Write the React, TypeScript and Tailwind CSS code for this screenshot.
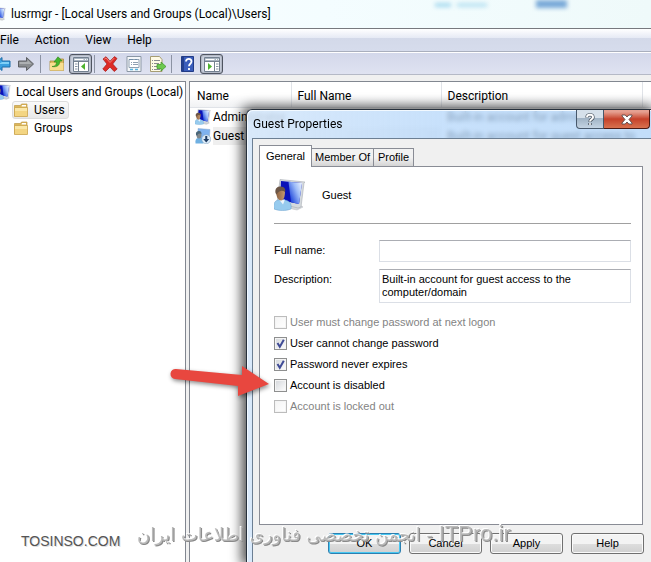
import type { ReactNode } from "react";
import { useState } from "react";

function ComputerUserIcon({ className, viewBox = "0 0 32 32" }: { className?: string; viewBox?: string }) {
  return (
    <svg className={className} viewBox={viewBox} aria-hidden="true">
      <defs>
        <linearGradient id="screen" x1="0" y1=".8" x2="1" y2=".1">
          <stop offset=".1" stopColor="#2148dc" />
          <stop offset=".6" stopColor="#9dbcf8" />
          <stop offset="1" stopColor="#eaf3ff" />
        </linearGradient>
        <linearGradient id="face" x1="0" x2="1">
          <stop offset="0" stopColor="#8a5f3e" />
          <stop offset="1" stopColor="#c79a70" />
        </linearGradient>
      </defs>
      <path d="M16 26l8-1 5 3-6 3-9-2z" fill="#d5d8db" stroke="#b4b9be" strokeWidth=".5" />
      <path d="M6 .5l25 2.500-1 1-3 24-3 1-21-5z" fill="#d5dade" stroke="#a7adb3" strokeWidth=".6" />
      <path d="M7 2l21 2-3 21-19-4z" fill="#0a12b8" />
      <path d="M14.500 2.700L28 4l-3 21-8-1.700z" fill="url(#screen)" />
      <path d="M0 30c-1-6 1-8 4-9h7c4 1 7 3 6 9-5 2-12 2-17 0z" fill="#97cbee" stroke="#6ba1cc" strokeWidth=".5" />
      <path d="M5 20.500l4 5 2-5z" fill="#eef6fc" />
      <path d="M2 12c0-4 9-4 9 0 0 5-1 9.500-4 9.500S2 17 2 12z" fill="url(#face)" />
      <path d="M1.500 14c-.8-5 2-6.500 5-6.500 4 0 5.500 3 4.500 5.500-3-2-6-1.500-8.500 2.500z" fill="#6b5546" />
    </svg>
  );
}

function DisabledUserIcon({ className }: { className?: string }) {
  return (
    <svg className={className} viewBox="0 0 32 32" aria-hidden="true">
      <path d="M6 1l24 2-2 24-22-3z" fill="#7fb2ee" stroke="#86a9cc" />
      <path d="M1 31c-1-7 1-10 5-11h6c4 1 6 5 5 11z" fill="#6fb0e2" />
      <ellipse cx="8" cy="14" rx="5" ry="7" fill="#80878b" />
      <path d="M2 14c-1-6 2-8 6-8 4 .3 5.500 3 4.500 6-4-2-7-1-8 4z" fill="#4a6678" />
      <circle cx="22.500" cy="22.500" r="9" fill="#dcebf8" stroke="#7d9cb8" />
      <path d="M20.500 16h4v6h4l-6 7-6-7h4z" fill="#1f3d63" />
    </svg>
  );
}

function FolderIcon() {
  return (
    <svg className="h-[14px] w-[14px] shrink-0" viewBox="0 0 14 14" aria-hidden="true">
      <path d="M.5 2.500h6l1-1.500h5.500v12H.5z" fill="#dcb65a" stroke="#bf9a45" strokeWidth=".7" />
      <path d="M8 2h4v1.500H7.500z" fill="#fff" />
      <path d="M.5 4.500h13v9H.5z" fill="#f3d582" stroke="#c9a24a" strokeWidth=".7" />
      <path d="M1 5h12v3H1z" fill="#fae7a8" />
    </svg>
  );
}

function ArrowIcon({ back }: { back?: boolean }) {
  return back ? (
    <svg className="h-4 w-[11px]" viewBox="5 0 11 16" aria-hidden="true">
      <path d="M0 8l7-6.500V5h8v6H7v3.500z" fill="#3aa0e0" stroke="#1d6da8" />
      <path d="M7 6h7v2H4z" fill="#7fd0f7" />
    </svg>
  ) : (
    <svg className="h-4 w-4" viewBox="0 0 16 16" aria-hidden="true">
      <path d="M15.500 8L8.500 1.500V5H.5v6h8v3.500z" fill="#8a8d90" stroke="#5c5f63" />
      <path d="M1.500 6h8V4l4 4h-12z" fill="#adb0b2" />
    </svg>
  );
}

function UpFolderIcon() {
  return (
    <svg className="h-4 w-4" viewBox="0 0 16 16" aria-hidden="true">
      <path d="M1 5h6l2-2h5.500v11.500H1z" fill="#e2bd62" stroke="#a98a3f" strokeWidth=".8" />
      <path d="M1 7h13.500v7.500H1z" fill="#f8de90" />
      <path d="M3 10.500c3 0 4.500-1.500 4.500-4.500H5L9 .8 13.200 5h-2.400c0 4-2.300 6.500-7.800 5.500z" fill="#45b52c" stroke="#2d8519" strokeWidth=".6" />
    </svg>
  );
}

function PaneIcon({ flip }: { flip?: boolean }) {
  return (
    <svg className="h-4 w-4" viewBox="0 0 16 16" aria-hidden="true">
      <path d="M.5 1.500h15v14H.5z" fill="#fff" stroke="#73808f" />
      <path d="M1 2h14v3H1z" fill="#a9b4c1" />
      <path d="M1.500 3.500h9M12 3.500h1M14 3.500h.8" stroke="#fff" />
      {flip ? (
        <>
          <path d="M10.500 6v9M1 5.500h14" stroke="#73808f" />
          <path d="M12 8h2.500M12 10.500h2.500M12 13h2.500" stroke="#8794a5" />
          <path d="M4 7l4 3.500L4 14z" fill="#4eb32f" />
        </>
      ) : (
        <>
          <path d="M5.500 6v9M1 5.500h14" stroke="#73808f" />
          <path d="M2 8h2.500M2 10.500h2.500M2 13h2.500" stroke="#8794a5" />
          <path d="M12 7l-4 3.500 4 3.500z" fill="#4eb32f" />
        </>
      )}
    </svg>
  );
}

function DeleteIcon() {
  return (
    <svg className="h-4 w-4" viewBox="0 0 16 16" aria-hidden="true">
      <path
        d="M1 3l3-2.300 4 4.500L12.500.6 15 2.500 10.700 8l4.500 5-3 2.500L8 11l-4.500 4.500L.8 13 5 8z"
        fill="#dd2b26"
        stroke="#a51512"
        strokeWidth=".7"
      />
      <path d="M2.300 3.200L4 2l4 4.500L12.300 2" stroke="#f58078" fill="none" />
    </svg>
  );
}

function PropertiesIcon() {
  return (
    <svg className="h-4 w-4" viewBox="0 0 16 16" aria-hidden="true">
      <path d="M1 .5h14v15H1z" fill="#f6f8fa" stroke="#8b97a5" />
      <path d="M3 3.500h10v8H3z" fill="#fff" stroke="#8fa0b2" />
      <path d="M3 3.500h4M9 3.500h2" stroke="#6f8ba5" />
      <path d="M5 6.500h1M7 6.500h5M5 8.500h1M7 8.500h5" stroke="#8fa0b2" />
      <path d="M4 13.500h3M9 13.500h3" stroke="#56b3de" strokeWidth="1.500" />
    </svg>
  );
}

function ExportIcon() {
  return (
    <svg className="h-4 w-4" viewBox="0 0 16 16" aria-hidden="true">
      <path d="M.5.5h9l2.500 3v12H.5z" fill="#fffbe6" stroke="#a69d73" />
      <path d="M2 4.500h1M4 4.500h6M2 7.500h1M4 7.500h5M2 10.500h1M4 10.500h5M2 13.500h1M4 13.500h6" stroke="#8c8c90" />
      <path d="M7 8.500h4V6l5 4.500-5 4.500v-2.500H7z" fill="#6cc94f" stroke="#3b9423" strokeWidth=".7" />
    </svg>
  );
}

function HelpIcon() {
  return (
    <svg className="h-4 w-[13px]" viewBox="0 0 13 16" aria-hidden="true">
      <path d="M.5.5h12v15H.5z" fill="#3a5dbb" stroke="#223c86" />
      <path d="M1 1h2v14H1z" fill="#23408f" />
      <path d="M5 5.500c0-3.500 5.500-3.500 5.500 0C10.500 8 8 7.500 8 10.300M8 12v2" fill="none" stroke="#fff" strokeWidth="1.800" />
    </svg>
  );
}

function ToolButton({ label, boxed, children }: { label: string; boxed?: boolean; children: ReactNode }) {
  return (
    <button
      type="button"
      aria-label={label}
      className={
        boxed
          ? "flex h-5 w-[23px] items-center justify-center rounded-[3px] border border-[#4f5561] bg-[#cdd2df] shadow-[inset_0_0_2px_#6b7280]"
          : "flex items-center justify-center"
      }
    >
      {children}
    </button>
  );
}

function Separator({ className }: { className: string }) {
  return <span className={`h-[18px] w-px bg-[#8c93a3] ${className}`} />;
}

const menus = ["File", "Action", "View", "Help"];

const accounts = [
  {
    name: "Administrator",
    description: "Built-in account for administering",
    icon: <ComputerUserIcon className="h-4 w-4 shrink-0" />,
  },
  {
    name: "Guest",
    description: "Built-in account for guest access to",
    icon: <DisabledUserIcon className="h-4 w-4 shrink-0" />,
    selected: true,
  },
];

const options = [
  { id: "must-change", label: "User must change password at next logon", checked: false, disabled: true },
  { id: "cannot-change", label: "User cannot change password", checked: true },
  { id: "never-expires", label: "Password never expires", checked: true },
  { id: "disabled", label: "Account is disabled", checked: false },
  { id: "locked", label: "Account is locked out", checked: false, disabled: true },
];

function Option({ id, label, checked, disabled }: { id: string; label: string; checked: boolean; disabled?: boolean }) {
  let [on, setOn] = useState(checked);

  return (
    <div className="flex h-[21px] items-center gap-[3px]">
      <span className="relative flex">
        <input
          id={id}
          type="checkbox"
          checked={on}
          disabled={disabled}
          onChange={(e) => setOn(e.target.checked)}
          className="h-[13px] w-[13px] appearance-none border border-[#8e8f8f] bg-linear-to-br from-[#d3d6da] to-white shadow-[inset_0_0_0_1px_#f4f4f4] disabled:border-[#bcbcbc] disabled:from-[#f4f4f4]"
        />
        {on && (
          <svg className="pointer-events-none absolute inset-0 h-[13px] w-[13px]" viewBox="0 0 13 13" aria-hidden="true">
            <path d="M3.500 6l2.300 3.800L9.800 2.800" fill="none" stroke="#3f4b96" strokeWidth="2" />
          </svg>
        )}
      </span>
      <label htmlFor={id} className={disabled ? "text-[#838383]" : ""}>
        {label}
      </label>
    </div>
  );
}

function DialogButton({ children, primary }: { children: ReactNode; primary?: boolean }) {
  return (
    <button
      type="button"
      className={`h-[21px] w-[73px] rounded-[3px] border bg-linear-to-b from-[#f3f3f3] from-50% via-[#dedede] via-50% to-[#d0d0d0] ${
        primary ? "border-[#2c7fb0] shadow-[inset_0_0_0_1px_#48c8f2]" : "border-[#707070] shadow-[inset_0_0_0_1px_#fafafa]"
      }`}
    >
      {children}
    </button>
  );
}

function PropertiesDialog() {
  return (
    <section
      role="dialog"
      aria-label="Guest Properties"
      className="absolute top-[109px] right-0 bottom-0 left-[246px] flex flex-col rounded-tl-[6px] border-t border-l border-[#27313d] bg-linear-to-r from-[#d5e7fa]/90 via-[#b4d6fa]/75 to-[#aed2f7]/75 pl-[5px] font-['Liberation_Sans',Arial,sans-serif] text-[11px] leading-[13px] shadow-[-2px_0_12px_3px_rgba(0,0,0,0.65),inset_1px_1px_0_#f2f9ff] backdrop-blur-[2px]"
    >
      <header className="flex h-7 items-start pr-px">
        <h2 className="flex-1 pt-[5px] pl-px font-[Roboto,'Noto_Sans',sans-serif] text-[12px] leading-[18px]">
          Guest Properties
        </h2>
        <button
          type="button"
          aria-label="Help"
          className="flex h-[19px] w-[28px] items-center justify-center rounded-bl-[4px] border border-t-0 border-[#47586b] bg-linear-to-b from-[#d5e0ea] from-45% via-[#9fb2c4] via-45% to-[#c4d4e3]"
        >
          <svg className="h-[13px] w-[10px]" viewBox="0 0 10 13" aria-hidden="true">
            <path d="M2 4.500c0-3.500 6-3.500 6 0C8 6.500 5 6 5 8.700M5 10v2" fill="none" stroke="#47525e" strokeWidth="3.400" />
            <path d="M2 4.200c0-3.200 6-3.200 6 0C8 6.500 5 6 5 8.500M5 10.200v1.600" fill="none" stroke="#fff" strokeWidth="2" />
          </svg>
        </button>
        <button
          type="button"
          aria-label="Close"
          className="flex h-[19px] w-[46px] items-center justify-center rounded-br-[4px] border border-t-0 border-l-0 border-[#4c1a14] bg-linear-to-b from-[#e5a091] from-10% via-[#c5412a] via-50% to-[#d8714f]"
        >
          <svg className="h-[11px] w-[12px]" viewBox="0 0 12 11" aria-hidden="true">
            <path
              d="M1 1h3.200L6 3l1.800-2H11v1L8 5.500 11 9v1H7.800L6 8l-1.800 2H1V9l3-3.500L1 2z"
              fill="#fff"
              stroke="#5b4a4a"
              strokeWidth=".9"
            />
          </svg>
        </button>
      </header>

      <div className="flex flex-1 flex-col border-t border-l border-[#6c7f93] bg-[#f0f0f0] pt-[6px] pr-[7px] pb-2 pl-[6px]">
        <div role="tablist" className="flex items-end pr-[1px]">
          <button
            type="button"
            role="tab"
            aria-selected="true"
            className="relative z-10 -mb-px h-[22px] w-[53px] border border-b-0 border-[#898c95] bg-white pb-px"
          >
            General
          </button>
          <button
            type="button"
            role="tab"
            aria-selected="false"
            className="h-[18px] w-[62px] border border-b-0 border-l-0 border-[#898c95] bg-linear-to-b from-[#f2f2f2] from-50% to-[#d4d4d4]"
          >
            Member Of
          </button>
          <button
            type="button"
            role="tab"
            aria-selected="false"
            className="h-[18px] w-[40px] border border-b-0 border-l-0 border-[#898c95] bg-linear-to-b from-[#f2f2f2] from-50% to-[#d4d4d4]"
          >
            Profile
          </button>
        </div>

        <div role="tabpanel" className="mr-px flex-1 border border-[#898c95] bg-white pt-[11px] pr-[11px] pl-[14px]">
          <div className="flex items-center gap-4 border-b border-[#a0a0a0] pb-[11px]">
            <ComputerUserIcon className="h-[34px] w-8" />
            <span>Guest</span>
          </div>

          <div className="mt-4 grid grid-cols-[105px_1fr] gap-y-[7px]">
            <label htmlFor="full-name" className="pt-1">
              Full name:
            </label>
            <input
              id="full-name"
              type="text"
              className="h-[22px] border border-[#dbdfe6] border-t-[#abadb3] bg-white px-[2px] outline-none"
            />
            <label htmlFor="description" className="pt-1">
              Description:
            </label>
            <textarea
              id="description"
              defaultValue="Built-in account for guest access to the computer/domain"
              className="h-[34px] resize-none overflow-hidden border border-[#dbdfe6] border-t-[#abadb3] bg-white py-[3px] pr-10 pl-[2px] outline-none"
            />
          </div>

          <div className="mt-[9px]">
            {options.map((option) => (
              <Option key={option.id} {...option} />
            ))}
          </div>
        </div>

        <div className="mt-2 flex justify-end gap-2">
          <DialogButton primary>OK</DialogButton>
          <DialogButton>Cancel</DialogButton>
          <DialogButton>Apply</DialogButton>
          <DialogButton>Help</DialogButton>
        </div>
      </div>
    </section>
  );
}

function PointerArrow() {
  return (
    <svg className="pointer-events-none absolute top-[362px] left-[168px] h-[40px] w-[104px] drop-shadow-[1px_2px_2px_rgba(0,0,0,0.45)]" viewBox="0 0 104 40" aria-hidden="true">
      <path d="M8 7L74 13V4L101 22L70 34V24L7 17A5 5 0 0 1 8 7Z" fill="#e8473f" />
    </svg>
  );
}

export default function App() {
  return (
    <main className="relative flex min-h-screen flex-col overflow-hidden bg-[#f0f0f0] font-[Roboto,'Noto_Sans',sans-serif] text-[12px] leading-[18px] text-black">
      <header className="relative flex h-[29px] items-center gap-[5px] overflow-hidden border-b border-[#77797e] bg-linear-to-r from-[#fafeff] via-[#f4fdff] to-[#effafa]">
        <ComputerUserIcon className="h-[14px] w-[6px]" viewBox="18 0 14 32" />
        <h1>lusrmgr - [Local Users and Groups (Local)\Users]</h1>
        <span className="absolute top-0 right-[84px] h-2 w-[31px] bg-[#79a9d8] blur-[2px]" />
        <span className="absolute top-[3px] right-[164px] h-1 w-[30px] bg-[#b9e2f2] blur-[2px]" />
        <span className="absolute top-[3px] right-[200px] h-1 w-[16px] bg-[#a6d9ef] blur-[2px]" />
      </header>

      <nav className="flex h-[23px] items-center gap-4 border-b border-[#a9afbd] bg-linear-[to_bottom,#fff,#e6eaf5_40%,#d3d9e9_40%,#d6dcec]">
        {menus.map((menu) => (
          <button key={menu} type="button">
            {menu}
          </button>
        ))}
      </nav>

      <div className="flex h-[23px] items-center border-t border-b border-t-white border-b-[#b5b9c6] bg-linear-to-b from-[#d3d8ea] to-[#dfe2f1]">
        <ToolButton label="Back">
          <ArrowIcon back />
        </ToolButton>
        <span className="w-[7px]" />
        <ToolButton label="Forward">
          <ArrowIcon />
        </ToolButton>
        <Separator className="mr-2 ml-[6px]" />
        <ToolButton label="Up one level">
          <UpFolderIcon />
        </ToolButton>
        <span className="w-1" />
        <ToolButton label="Show console tree" boxed>
          <PaneIcon />
        </ToolButton>
        <Separator className="mr-[7px] ml-[2px]" />
        <div className="flex gap-2">
          <ToolButton label="Delete">
            <DeleteIcon />
          </ToolButton>
          <ToolButton label="Properties">
            <PropertiesIcon />
          </ToolButton>
          <ToolButton label="Export list">
            <ExportIcon />
          </ToolButton>
        </div>
        <Separator className="mr-[9px] ml-[5px]" />
        <ToolButton label="Help">
          <HelpIcon />
        </ToolButton>
        <span className="w-[6px]" />
        <ToolButton label="Show action pane" boxed>
          <PaneIcon flip />
        </ToolButton>
      </div>

      <div className="flex flex-1 gap-[3px] pt-[6px]">
        <aside className="w-[186px] shrink-0 border-t border-r border-[#828790] bg-white pt-px">
          <div className="flex h-[18px] items-center gap-[5px] whitespace-nowrap">
            <ComputerUserIcon className="h-4 w-[11px] shrink-0" viewBox="10 0 22 32" />
            Local Users and Groups (Local)
          </div>
          <ul className="pl-3">
            <li className="flex h-[18px] w-fit items-center gap-[6px] rounded-[3px] border border-[#dcdcdc] bg-linear-to-b from-[#fafafa] to-[#e8e8e8] pr-[3px] pl-px">
              <FolderIcon />
              Users
            </li>
            <li className="flex h-[18px] w-fit items-center gap-[6px] border border-transparent pr-[3px] pl-px">
              <FolderIcon />
              Groups
            </li>
          </ul>
        </aside>

        <div className="flex-1 overflow-hidden border-t border-l border-[#828790] bg-white">
          <table className="w-full table-fixed border-collapse">
            <thead>
              <tr className="h-[25px] bg-linear-to-b from-white from-50% to-[#f1f2f4] text-left">
                <th className="w-[101px] border-r border-b border-[#e0e3e8] pt-[3px] pl-[7px] font-normal">Name</th>
                <th className="w-[150px] border-r border-b border-[#e0e3e8] pt-[3px] pl-[6px] font-normal">Full Name</th>
                <th className="border-r border-b border-[#e0e3e8] pt-[3px] pl-[6px] font-normal">Description</th>
                <th className="w-[9px] border-b border-[#e0e3e8]" />
              </tr>
            </thead>
            <tbody>
              {accounts.map((account) => (
                <tr key={account.name} className="h-[19px] whitespace-nowrap">
                  <td className="pl-[5px]">
                    <span className="flex h-[19px] items-center gap-[2px]">
                      {account.icon}
                      <span className={account.selected ? "flex-1 bg-[#efefef]" : "flex-1"}>{account.name}</span>
                    </span>
                  </td>
                  <td className={account.selected ? "bg-[#efefef]" : ""} />
                  <td className="pl-[6px]">{account.description}</td>
                  <td />
                </tr>
              ))}
            </tbody>
          </table>
        </div>
      </div>

      <PropertiesDialog />
      <PointerArrow />

      <p className="pointer-events-none absolute bottom-3 left-[21px] font-['Liberation_Sans',Arial,sans-serif] text-[14px] text-[#555] [text-shadow:1px_1px_0_#ddd]">
        TOSINSO.COM
      </p>
      <p
        dir="rtl"
        className="pointer-events-none absolute bottom-[13px] left-[137px] font-['DejaVu_Sans',sans-serif] text-[18px] leading-[28px] whitespace-nowrap text-[#b4b4b4]/90 [text-shadow:-1px_-1px_0_#fff,1px_1px_0_#8a8a8a]"
      >
        <bdi className="font-['Liberation_Sans',Arial,sans-serif] text-[22px]">ITPro.ir</bdi> - انجمن تخصصی فناوری اطلاعات ایران
      </p>
    </main>
  );
}
